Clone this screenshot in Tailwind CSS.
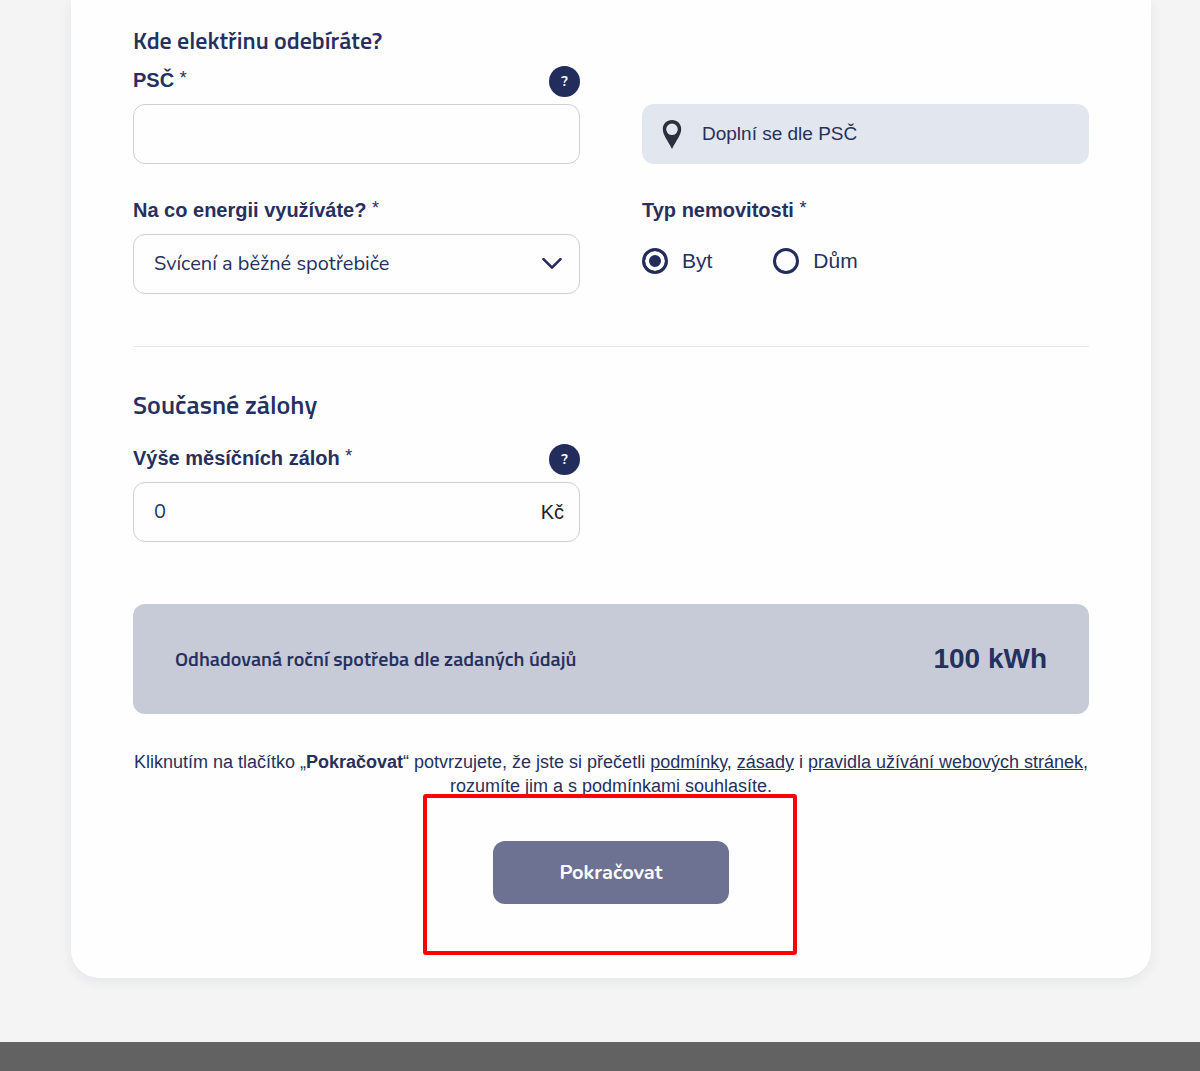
<!DOCTYPE html>
<html lang="cs">
<head>
<meta charset="utf-8">
<meta name="viewport" content="width=device-width, initial-scale=1">
<title>Spotřeba elektřiny</title>
<script src="https://cdn.jsdelivr.net/npm/@tailwindcss/browser@4"></script>
</head>
<body class="flex min-h-screen flex-col bg-[#f4f4f4] font-['Liberation_Sans',Arial,sans-serif] text-[#26305e]">
<main class="pr-[49px] pb-16 pl-[71px]">
  <form class="rounded-b-[28px] bg-[#fefefe] px-[62px] pt-6 pb-[74px] shadow-[0_4px_12px_rgba(35,45,92,0.07)]">
    <h2 class="font-['Titillium_Web','Noto_Sans',sans-serif] text-[24px] leading-8 font-semibold">Kde elektřinu odebíráte?</h2>

    <div class="mt-[10px] grid grid-cols-2 gap-x-[62px] gap-y-8">
      <div>
        <div class="flex h-[31px] items-start justify-between">
          <label for="psc" class="text-[20px] leading-7 font-bold">PSČ <span class="align-[3px] text-[18px] leading-none font-normal">*</span></label>
          <button type="button" aria-label="Nápověda k PSČ" class="size-[31px] rounded-full bg-[#232d5c] font-['Nunito','Lato',sans-serif] text-sm font-bold text-white">?</button>
        </div>
        <input id="psc" type="text" class="mt-[7px] block h-[60px] w-full rounded-xl border border-[#cfcfcf] bg-transparent px-5 text-[20px]">
      </div>
      <div class="flex items-end">
        <div class="flex h-[60px] w-full items-center rounded-xl bg-[#e2e6ef] pl-5 text-[19px]">
          <svg class="h-[29px] w-5" viewBox="0 0 20 29" fill="#2b303f"><path fill-rule="evenodd" d="M10 0C4.700 0 .8 3.900 .8 8.900c0 6 4.700 11 9.200 20.100 4.500-9.100 9.200-14.100 9.200-20.100C19.200 3.900 15.300 0 10 0Zm0 3.500a5.800 5.800 0 1 1 0 11.600 5.800 5.800 0 0 1 0-11.600Z"/></svg>
          <span class="ml-5">Doplní se dle PSČ</span>
        </div>
      </div>
      <div>
        <div class="flex h-[31px] items-start">
          <label for="usage" class="text-[20px] leading-7 font-bold">Na co energii využíváte? <span class="align-[3px] text-[18px] leading-none font-normal">*</span></label>
        </div>
        <div class="relative mt-[7px]">
          <select id="usage" class="block h-[60px] w-full appearance-none rounded-xl border border-[#cfcfcf] bg-transparent px-5 font-['Nunito','Lato',sans-serif] text-[20px]">
            <option>Svícení a běžné spotřebiče</option>
          </select>
          <svg class="pointer-events-none absolute top-6 right-[18px] h-3 w-5" viewBox="0 0 20 12" fill="none" stroke="#232d5c" stroke-width="2.600" stroke-linecap="round" stroke-linejoin="round"><path d="M1.500 1.200 10 9.700l8.500-8.500"/></svg>
        </div>
      </div>
      <fieldset>
        <legend class="flex h-[31px] items-start text-[20px] leading-7 font-bold"><span>Typ nemovitosti <span class="align-[3px] text-[18px] leading-none font-normal">*</span></span></legend>
        <div class="mt-[5px] flex h-[60px] items-start gap-[61px] pt-[16px] text-[21px] leading-[26px]">
          <label class="flex items-center gap-[14px]"><input type="radio" name="typ" checked class="size-[26px] appearance-none rounded-full border-[3px] border-[#232d5c] checked:bg-[#232d5c] checked:shadow-[inset_0_0_0_4px_white]">Byt</label>
          <label class="flex items-center gap-[14px]"><input type="radio" name="typ" class="size-[26px] appearance-none rounded-full border-[3px] border-[#232d5c] checked:bg-[#232d5c] checked:shadow-[inset_0_0_0_4px_white]">Dům</label>
        </div>
      </fieldset>
    </div>

    <hr class="mt-[52px] border-[#e8e8e8]">

    <h2 class="mt-[42px] font-['Titillium_Web','Noto_Sans',sans-serif] text-[26px] leading-8 font-semibold">Současné zálohy</h2>

    <div class="mt-[23px] grid grid-cols-2 gap-x-[62px]">
      <div>
        <div class="flex h-[31px] items-start justify-between">
          <label for="deposit" class="text-[20px] leading-7 font-bold">Výše měsíčních záloh <span class="align-[3px] text-[18px] leading-none font-normal">*</span></label>
          <button type="button" aria-label="Nápověda k zálohám" class="size-[31px] rounded-full bg-[#232d5c] font-['Nunito','Lato',sans-serif] text-sm font-bold text-white">?</button>
        </div>
        <div class="mt-[7px] flex h-[60px] items-center rounded-xl border border-[#cfcfcf] pr-[15px] pl-5 text-[20px]">
          <input id="deposit" type="text" value="0" class="min-w-0 flex-1 bg-transparent font-['Nunito','Lato',sans-serif] outline-none">
          <label for="deposit" class="text-[#222]">Kč</label>
        </div>
      </div>
    </div>

    <div class="mt-[62px] flex h-[110px] items-center justify-between rounded-xl bg-[#c7cbd7] px-[42px] font-bold">
      <span class="font-['Titillium_Web','Noto_Sans',sans-serif] text-[20px] font-semibold">Odhadovaná roční spotřeba dle zadaných údajů</span>
      <output class="text-[28px] leading-8">100 kWh</output>
    </div>

    <p class="mt-9 text-center text-[18px] leading-6">Kliknutím na tlačítko „<b>Pokračovat</b>“ potvrzujete, že jste si přečetli <a href="#" class="underline">podmínky</a>, <a href="#" class="underline">zásady</a> i <a href="#" class="underline">pravidla užívání webových stránek</a>, rozumíte jim a s podmínkami souhlasíte.</p>

    <div class="mt-[43px] flex justify-center">
      <div class="relative">
        <button type="submit" class="h-[63px] w-[236px] rounded-xl bg-[#6d7192] font-['Nunito','Lato',sans-serif] text-[20px] font-bold text-white">Pokračovat</button>
        <div class="pointer-events-none absolute -top-[47px] -right-[68px] -bottom-[51px] -left-[70px] rounded-[3px] border-4 border-[#fb0207]"></div>
      </div>
    </div>
  </form>
</main>
<footer class="min-h-[29px] flex-1 bg-[#626262]"></footer>
</body>
</html>
